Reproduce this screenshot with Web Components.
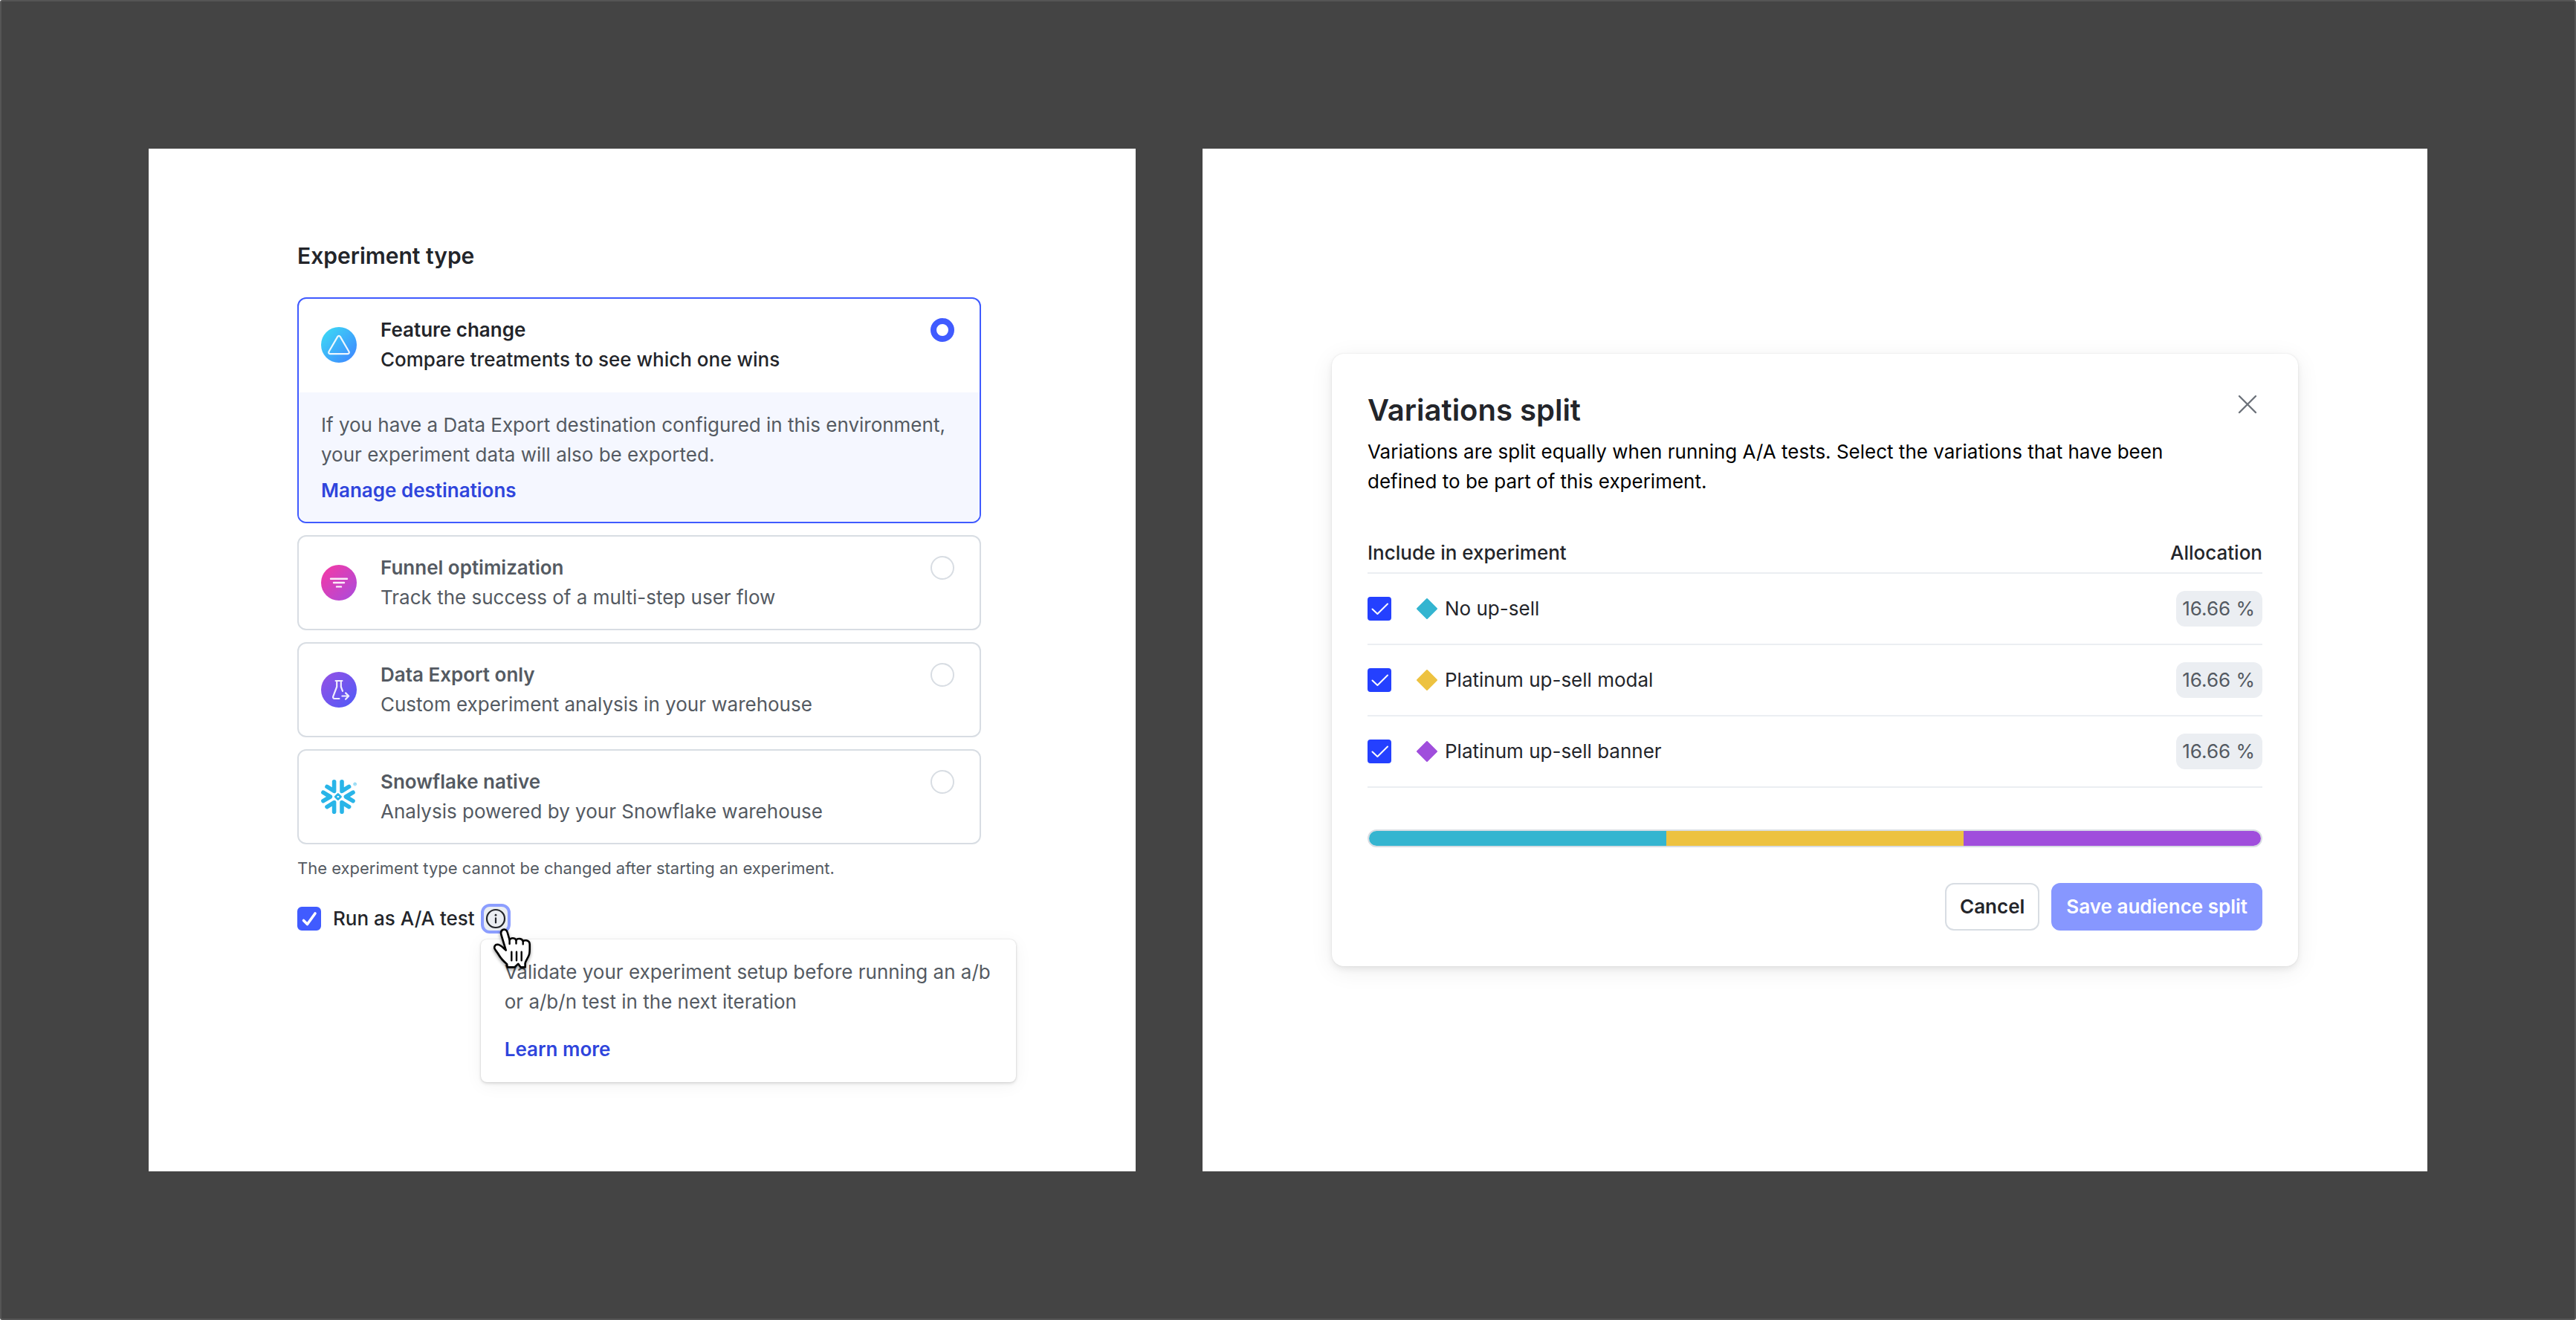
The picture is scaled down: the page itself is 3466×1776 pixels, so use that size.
<!DOCTYPE html>
<html lang="en">
<head>
<meta charset="utf-8">
<title>Experiment setup</title>
<style>
  * {
    box-sizing: border-box;
  }
  html {
    background: #fff;
  }
  body {
    margin: 0;
    min-height: 100vh;
    display: grid;
    grid-template-columns: 1328fr 1648fr;
    gap: 90px;
    padding: 198px;
    border: 2px solid #555;
    border-radius: 3px;
    background: #444;
    color: #23252a;
    font: 400 26px/40px Inter, "Liberation Sans", sans-serif;
  }
  .type-panel {
    background: #fff;
    padding: 124px 208px 120px 200px;
  }
  .split-panel {
    background: #fff;
    display: flex;
    flex-direction: column;
    justify-content: center;
    padding: 0 174px;
  }
</style>
</head>
<body>

<main class="type-panel">
  <experiment-type>
    <type-card name="Feature change" description="Compare treatments to see which one wins" checked>
      <svg slot="icon" viewBox="0 0 48 48" width="48" height="48" aria-hidden="true">
        <defs>
          <linearGradient id="feature" x1="0" y1="0" x2="1" y2="1">
            <stop offset="0.1" stop-color="#3dd6f5"/>
            <stop offset="0.9" stop-color="#3e8bff"/>
          </linearGradient>
        </defs>
        <circle cx="24" cy="24" r="24" fill="url(#feature)"/>
        <path d="M22.300 12.900 10.400 33.300a1.900 1.900 0 0 0 1.600 2.800h24a1.900 1.900 0 0 0 1.600-2.800L25.700 12.900a1.900 1.900 0 0 0-3.400 0Z" fill="none" stroke="#fff" stroke-opacity=".9" stroke-width="2.200" stroke-linejoin="round"/>
      </svg>
      <p>If you have a Data Export destination configured in this environment, your experiment data will also be exported.</p>
      <a href="#destinations">Manage destinations</a>
    </type-card>

    <type-card name="Funnel optimization" description="Track the success of a multi-step user flow">
      <svg slot="icon" viewBox="0 0 48 48" width="48" height="48" aria-hidden="true">
        <defs>
          <linearGradient id="funnel" x1="0" y1="0" x2="1" y2="1">
            <stop offset="0.1" stop-color="#f03aa8"/>
            <stop offset="0.9" stop-color="#b04ad8"/>
          </linearGradient>
        </defs>
        <circle cx="24" cy="24" r="24" fill="url(#funnel)"/>
        <path d="M13 18.800h22M17 24h14M21 29.400h6" stroke="#fff" stroke-opacity=".9" stroke-width="2.400" stroke-linecap="round"/>
      </svg>
    </type-card>

    <type-card name="Data Export only" description="Custom experiment analysis in your warehouse">
      <svg slot="icon" viewBox="0 0 48 48" width="48" height="48" aria-hidden="true">
        <defs>
          <linearGradient id="export" x1="0" y1="0" x2="1" y2="1">
            <stop offset="0.1" stop-color="#8f52e6"/>
            <stop offset="0.9" stop-color="#5659f6"/>
          </linearGradient>
        </defs>
        <circle cx="24" cy="24" r="24" fill="url(#export)"/>
        <g fill="none" stroke="#fff" stroke-opacity=".9" stroke-width="2.200" stroke-linecap="round" stroke-linejoin="round">
          <path d="M19.600 12h8.800M21.200 12v8l-5 13.200c-.5 1.600.4 2.800 1.800 2.800h6.400M26.800 12v8l2.200 5.800"/>
          <path d="M28.400 32.500h8.300M33 28.400l4.200 4.100-4.200 4.200"/>
        </g>
      </svg>
    </type-card>

    <type-card name="Snowflake native" description="Analysis powered by your Snowflake warehouse">
      <svg slot="icon" viewBox="0 0 48 48" width="48" height="48" aria-hidden="true">
        <g fill="none" stroke="#29b5e8" stroke-width="5.600" stroke-linecap="round" stroke-linejoin="round">
          <path d="M17.600 3.800v12.600L8 10.400"/>
          <path d="M28 3.800v12.600l9.600-6"/>
          <path d="M17.600 44.200V31.600L8 37.600"/>
          <path d="M28 44.200V31.600l9.600 6"/>
          <path d="M2.900 18.200 12.400 24l-9.500 5.600"/>
          <path d="M43 18.200 33.400 24l9.600 5.600"/>
        </g>
        <path d="m22.800 20.400 3.700 3.600-3.700 3.600-3.600-3.600Z" fill="#fff" stroke="#29b5e8" stroke-width="2.800" stroke-linejoin="round"/>
        <circle cx="45.600" cy="7" r="2" fill="none" stroke="#29b5e8" stroke-width=".5"/>
        <path d="M45 8V6h.8a.6.6 0 0 1 0 1.200H45m.8 0 .5.800" fill="none" stroke="#29b5e8" stroke-width=".5"/>
      </svg>
    </type-card>

    <aa-toggle slot="footer">
      <p>Validate your experiment setup before running an a/b or a/b/n test in the next iteration</p>
      <a href="#aa-tests">Learn more</a>
    </aa-toggle>
  </experiment-type>
</main>

<section class="split-panel">
  <variations-split></variations-split>
</section>

<script>
  class ExperimentType extends HTMLElement {
    constructor() {
      super();

      const shadowRoot = this.attachShadow({mode: 'open'});

      shadowRoot.innerHTML = `
        <style>
          :host {
            display: block;
          }
          h2 {
            margin: 0 0 36px;
            font-size: 30px;
            line-height: 40px;
            font-weight: 600;
          }
          .cards {
            display: flex;
            flex-direction: column;
            gap: 16px;
          }
          .note {
            margin: 12px 0 28px;
            font-size: 22px;
            color: #545a62;
          }
        </style>

        <h2 id="heading">Experiment type</h2>
        <div class="cards" role="radiogroup" aria-labelledby="heading"><slot></slot></div>
        <p class="note">The experiment type cannot be changed after starting an experiment.</p>
        <slot name="footer"></slot>
      `;
    }

    connectedCallback() {
      this.addEventListener('type-selected', ({target}) => {
        this.querySelectorAll('type-card').forEach(card => {
          card.toggleAttribute('checked', card === target);
        });
      });
    }
  }

  class TypeCard extends HTMLElement {
    static get observedAttributes() {
      return ['checked'];
    }

    constructor() {
      super();

      const shadowRoot = this.attachShadow({mode: 'open'});

      shadowRoot.innerHTML = `
        <style>
          :host {
            display: block;
            border: 2px solid #d8dde3;
            border-radius: 12px;
            overflow: hidden;
            color: #545a62;
          }
          :host([checked]) {
            border-color: #405bff;
          }
          label {
            display: grid;
            grid-template-columns: 48px 1fr 32px;
            column-gap: 32px;
            align-items: center;
            padding: 22px 34px 22px 30px;
          }
          :host([checked]) label {
            padding-bottom: 24px;
            color: #23252a;
          }
          :host([checked]) .description {
            font-weight: 450;
          }
          .text {
            display: flex;
            flex-direction: column;
          }
          .name {
            font-weight: 600;
          }
          ::slotted(svg) {
            display: block;
          }
          input {
            appearance: none;
            align-self: start;
            box-sizing: border-box;
            width: 32px;
            height: 32px;
            margin: 4px 0;
            border: 2px solid #d8dde3;
            border-radius: 50%;
            background: #fff;
          }
          input:checked {
            border: 8px solid #405bff;
          }
          .details {
            display: none;
            flex-direction: column;
            align-items: flex-start;
            gap: 8px;
            padding: 24px 30px 22px;
            background: #f5f7ff;
          }
          :host([checked]) .details {
            display: flex;
          }
          ::slotted(p) {
            margin: 0;
          }
          ::slotted(a) {
            color: #2f45dc;
            font-weight: 600;
            text-decoration: none;
          }
        </style>

        <label>
          <slot name="icon"></slot>
          <span class="text">
            <span class="name"></span>
            <span class="description"></span>
          </span>
          <input type="radio">
        </label>
        <div class="details"><slot></slot></div>
      `;
    }

    connectedCallback() {
      this.shadowRoot.querySelector('.name').textContent = this.getAttribute('name');
      this.shadowRoot.querySelector('.description').textContent = this.getAttribute('description');

      this.shadowRoot.querySelector('input').addEventListener('change', () => {
        this.dispatchEvent(new CustomEvent('type-selected', {bubbles: true}));
      });
    }

    attributeChangedCallback() {
      this.shadowRoot.querySelector('input').checked = this.hasAttribute('checked');
    }
  }

  class AaToggle extends HTMLElement {
    constructor() {
      super();

      const shadowRoot = this.attachShadow({mode: 'open'});

      shadowRoot.innerHTML = `
        <style>
          :host {
            display: flex;
            align-items: center;
            gap: 8px;
          }
          label {
            display: flex;
            align-items: center;
            gap: 16px;
            font-weight: 500;
          }
          check-box {
            --fill: #405bff;
            --radius: 6px;
          }
          .info {
            position: relative;
            display: flex;
          }
          button {
            box-sizing: border-box;
            display: grid;
            place-items: center;
            width: 40px;
            height: 40px;
            padding: 0;
            border: 4px solid #8c9eff;
            border-radius: 12px;
            background: #ebeef2;
            color: #23252a;
          }
          .tooltip {
            position: absolute;
            top: 48px;
            left: 0;
            box-sizing: border-box;
            width: 720px;
            display: flex;
            flex-direction: column;
            align-items: flex-start;
            gap: 24px;
            padding: 24px 32px;
            border-radius: 8px;
            background: #fff;
            color: #545a62;
            box-shadow: 0 0 2px rgba(0, 0, 0, 0.16), 0 2px 4px rgba(0, 0, 0, 0.12), 0 4px 24px rgba(0, 0, 0, 0.05);
          }
          ::slotted(p) {
            margin: 0;
          }
          ::slotted(a) {
            color: #2f45dc;
            font-weight: 600;
            text-decoration: none;
          }
          .pointer {
            position: absolute;
            top: 30px;
            left: 12px;
            pointer-events: none;
            filter: drop-shadow(0 2px 2px rgba(0, 0, 0, 0.4));
          }
        </style>

        <label>
          <check-box label="Run as A/A test"></check-box>
          Run as A/A test
        </label>
        <div class="info">
          <button type="button" aria-label="About A/A tests" aria-describedby="tip">
            <svg viewBox="0 0 28 28" width="28" height="28" aria-hidden="true">
              <circle cx="14" cy="14" r="12" fill="none" stroke="currentColor" stroke-width="2.200"/>
              <circle cx="14" cy="9.200" r="1.400" fill="currentColor"/>
              <path d="M14 13.400v6" stroke="currentColor" stroke-width="2.200" stroke-linecap="round"/>
            </svg>
          </button>
          <div class="tooltip" id="tip" role="tooltip"><slot></slot></div>
          <svg class="pointer" viewBox="0 0 60 60" width="60" height="60" aria-hidden="true">
            <path d="M21.700 32.500 15.500 12c-1-3.500 0-6.300 2.700-7.200 2.600-.8 4.600.7 5.500 3.700l2.900 10c.9-1.500 2.300-2.300 4.200-2.300 2.300 0 3.800.9 4.700 2.600 1-1.300 2.400-1.900 4.300-1.800 2.400.1 4 1.200 4.900 3.200 1.200-.9 2.700-1.200 4.400-.9 3 .6 4.600 2.300 4.600 5.200 0 5.100.3 9.700-.6 13.200-1.200 4.900-4.300 7.800-5.500 12.300v5.400h-6l-3.300-4.600-5 4.600h-9.600l-.6-4.200C18.500 47.200 14.500 43 12 38.500c-2-3.500-4.600-5.900-5.500-8.400-.9-2.700.9-5.200 3.700-5.300 4.200 0 7.500 4.200 11.500 7.700Z" fill="#fff" stroke="#000" stroke-width="2.600" stroke-linejoin="round"/>
            <path d="M26.600 18.500v5.500M35.500 18.800v4.700M44.700 20.400v4M29.300 34.700v11.600M36 34.700v11.600M42.700 34.700v11.600" fill="none" stroke="#000" stroke-width="2.400" stroke-linecap="round"/>
          </svg>
        </div>
      `;
    }
  }

  class CheckBox extends HTMLElement {
    constructor() {
      super();

      const shadowRoot = this.attachShadow({mode: 'open', delegatesFocus: true});

      shadowRoot.innerHTML = `
        <style>
          :host {
            display: grid;
            width: 32px;
            height: 32px;
          }
          input,
          svg {
            grid-area: 1 / 1;
            width: 32px;
            height: 32px;
            margin: 0;
          }
          input {
            appearance: none;
            box-sizing: border-box;
            border: 2px solid #d8dde3;
            border-radius: var(--radius, 4px);
          }
          input:checked {
            border-color: var(--fill);
            background: var(--fill);
          }
          svg {
            display: none;
            pointer-events: none;
          }
          input:checked + svg {
            display: block;
          }
        </style>

        <input type="checkbox" checked>
        <svg viewBox="0 0 32 32" fill="none" stroke="#fff" stroke-linecap="round" stroke-linejoin="round" aria-hidden="true"></svg>
      `;
    }

    connectedCallback() {
      const thin = this.hasAttribute('thin');
      const check = thin ? 'M6.500 16.500 13.400 23 27 9.500' : 'M8.500 18.500 13.500 23.500 24 9';

      this.shadowRoot.querySelector('input').setAttribute('aria-label', this.getAttribute('label'));
      this.shadowRoot.querySelector('svg').innerHTML = `<path d="${check}" stroke-width="${thin ? 2 : 3.6}"/>`;
    }
  }

  class VariationsSplit extends HTMLElement {
    constructor() {
      super();

      this.variations = [
        {name: 'No up-sell', color: '#34b5d0', allocation: 16.66},
        {name: 'Platinum up-sell modal', color: '#edc240', allocation: 16.66},
        {name: 'Platinum up-sell banner', color: '#a04edc', allocation: 16.66}
      ];

      const shadowRoot = this.attachShadow({mode: 'open'});

      shadowRoot.innerHTML = `
        <style>
          :host {
            display: block;
            padding: 48px;
            border-radius: 16px;
            background: #fff;
            box-shadow: 0 0 2px rgba(0, 0, 0, 0.1), 0 4px 8px rgba(0, 0, 0, 0.07), 0 6px 32px rgba(0, 0, 0, 0.07);
          }
          header {
            display: flex;
            justify-content: space-between;
            align-items: flex-start;
            padding: 4px 0 12px;
          }
          h2 {
            margin: 0;
            font-size: 40px;
            line-height: 48px;
            font-weight: 600;
          }
          button {
            font: inherit;
          }
          .close {
            display: flex;
            padding: 0;
            margin: 0 4px;
            border: 0;
            background: none;
            color: #6c727a;
          }
          .intro {
            max-width: 1100px;
            margin: 0 0 56px;
            color: #000;
          }
          table {
            width: 100%;
            border-collapse: separate;
            border-spacing: 0;
          }
          th,
          td {
            padding: 0;
            border-bottom: 2px solid #ebeef2;
            text-align: left;
          }
          th {
            padding-bottom: 6px;
            font-weight: 450;
          }
          td {
            height: 94px;
          }
          th:last-child,
          td:last-child {
            text-align: right;
          }
          .variation {
            display: flex;
            align-items: center;
          }
          check-box {
            --fill: #2440ff;
            margin-right: 32px;
          }
          .variation svg {
            margin-right: 8px;
          }
          .allocation {
            display: inline-block;
            padding: 4px 10px 4px 8px;
            border-radius: 12px;
            background: #ebeef2;
            color: #545a62;
          }
          .bar {
            display: flex;
            box-sizing: border-box;
            height: 24px;
            margin: 56px 0 48px;
            border: 2px solid #d8dde3;
            border-radius: 12px;
            overflow: hidden;
          }
          .bar span {
            flex: 1;
          }
          footer {
            display: flex;
            justify-content: flex-end;
            gap: 16px;
          }
          footer button {
            height: 64px;
            padding: 0 18px;
            border: 2px solid #d8dde3;
            border-radius: 12px;
            background: #fff;
            color: #23252a;
            font-weight: 600;
          }
          footer .save {
            border-color: #8797ff;
            background: #8797ff;
            color: #fff;
          }
        </style>

        <header>
          <h2>Variations split</h2>
          <button class="close" type="button" aria-label="Close">
            <svg viewBox="0 0 32 32" width="32" height="32" aria-hidden="true">
              <path d="m5 5 22 22M27 5 5 27" stroke="currentColor" stroke-width="2.400" stroke-linecap="round"/>
            </svg>
          </button>
        </header>
        <p class="intro">Variations are split equally when running A/A tests. Select the variations that have been defined to be part of this experiment.</p>
        <table>
          <thead>
            <tr><th scope="col">Include in experiment</th><th scope="col">Allocation</th></tr>
          </thead>
          <tbody></tbody>
        </table>
        <div class="bar"></div>
        <footer>
          <button type="button">Cancel</button>
          <button class="save" type="button">Save audience split</button>
        </footer>
      `;
    }

    connectedCallback() {
      this.shadowRoot.querySelector('tbody').innerHTML = this.variations.map(({name, color, allocation}) => `
        <tr>
          <td>
            <label class="variation">
              <check-box thin label="${name}"></check-box>
              <svg viewBox="0 0 32 32" width="32" height="32" aria-hidden="true">
                <path d="M16 3 29 16 16 29 3 16Z" fill="${color}" stroke="${color}" stroke-width="2" stroke-linejoin="round"/>
              </svg>
              ${name}
            </label>
          </td>
          <td><span class="allocation">${allocation} %</span></td>
        </tr>
      `).join('');

      this.shadowRoot.querySelector('.bar').innerHTML = this.variations.map(({color}) => (
        `<span style="background: ${color}"></span>`
      )).join('');
    }
  }

  customElements.define('check-box', CheckBox);
  customElements.define('type-card', TypeCard);
  customElements.define('aa-toggle', AaToggle);
  customElements.define('experiment-type', ExperimentType);
  customElements.define('variations-split', VariationsSplit);
</script>
</body>
</html>
